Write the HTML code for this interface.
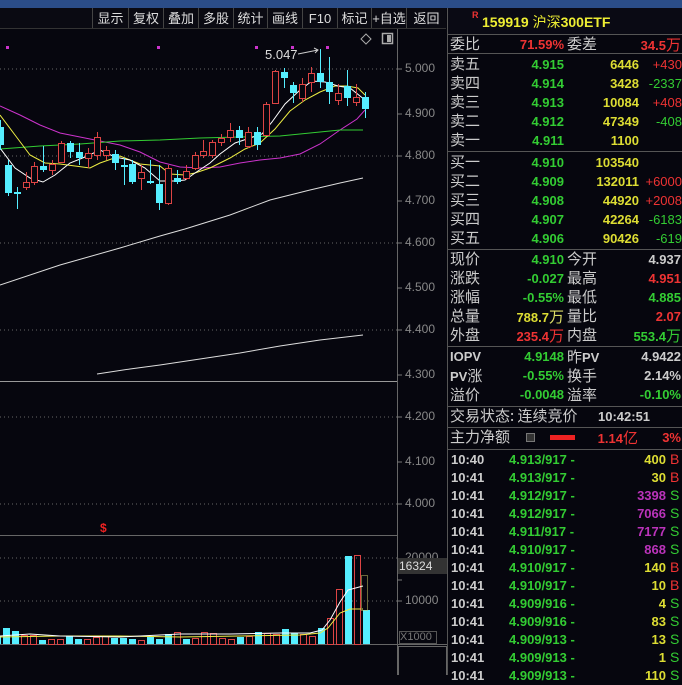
<!DOCTYPE html>
<html><head><meta charset="utf-8"><style>
*{margin:0;padding:0;box-sizing:border-box}
body{width:682px;height:675px;background:#06060e;overflow:hidden;position:relative;font-family:"Liberation Sans","Noto Sans CJK SC",sans-serif;}
.a{position:absolute;white-space:nowrap}
.tb{position:absolute;top:8px;height:21px;border-left:1px solid #444;color:#ddd;font-size:13px;line-height:21px;text-align:center}
.r{position:absolute;height:19px;line-height:19px;font-size:13px;font-weight:bold;white-space:nowrap}
.lb{font-family:"Noto Sans CJK SC",sans-serif;font-weight:normal;font-size:15px;color:#ccc}
.g{color:#3c3}.y{color:#dd3}.rd{color:#e33}.w{color:#ccc}.m{color:#b3b}
.ax{position:absolute;left:405px;font-size:12px;color:#888;}
.hl{position:absolute;left:448px;width:234px;height:1px;background:#555}
</style></head><body>
<div class="a" style="left:0;top:0;width:682px;height:8px;background:#2b4d88"></div>
<div class="a" style="left:0;top:8px;width:446px;height:21px;background:#0a0a12"></div>
<div class="tb" style="left:92px;width:36px">显示</div>
<div class="tb" style="left:128px;width:35px">复权</div>
<div class="tb" style="left:163px;width:35px">叠加</div>
<div class="tb" style="left:198px;width:35px">多股</div>
<div class="tb" style="left:233px;width:34px">统计</div>
<div class="tb" style="left:267px;width:35px">画线</div>
<div class="tb" style="left:302px;width:35px">F10</div>
<div class="tb" style="left:337px;width:34px">标记</div>
<div class="tb" style="left:371px;width:35px">+自选</div>
<div class="tb" style="left:406px;width:40px">返回</div>
<div class="a" style="left:0;top:28px;width:446px;height:1px;background:#333"></div>
<svg class="a" style="left:0;top:0" width="448" height="675">
<g stroke="#666" stroke-dasharray="1,3">
<line x1="0" y1="69" x2="397" y2="69"/><line x1="0" y1="156" x2="397" y2="156"/><line x1="0" y1="243" x2="397" y2="243"/><line x1="0" y1="330" x2="397" y2="330"/><line x1="0" y1="417" x2="397" y2="417"/><line x1="0" y1="504" x2="397" y2="504"/><line x1="0" y1="558" x2="397" y2="558"/><line x1="0" y1="601" x2="397" y2="601"/>
</g>
<g stroke="#666"><line x1="397.5" y1="29" x2="397.5" y2="675"/>
<line x1="0" y1="381.5" x2="397" y2="381.5" stroke="#999"/><line x1="0" y1="535.5" x2="397" y2="535.5"/><line x1="0" y1="644.5" x2="448" y2="644.5"/>
<rect x="398.5" y="646.5" width="48" height="30" fill="none"/>
</g>
<g stroke="#777">
<line x1="397" y1="69" x2="402" y2="69"/><line x1="397" y1="114" x2="402" y2="114"/><line x1="397" y1="156" x2="402" y2="156"/><line x1="397" y1="201" x2="402" y2="201"/><line x1="397" y1="243" x2="402" y2="243"/><line x1="397" y1="288" x2="402" y2="288"/><line x1="397" y1="330" x2="402" y2="330"/><line x1="397" y1="375" x2="402" y2="375"/><line x1="397" y1="417" x2="402" y2="417"/><line x1="397" y1="462" x2="402" y2="462"/><line x1="397" y1="504" x2="402" y2="504"/><line x1="397" y1="580" x2="402" y2="580"/><line x1="397" y1="601" x2="402" y2="601"/>
</g>
<g fill="#c3c"><rect x="6" y="46" width="3" height="3"/><rect x="157" y="46" width="3" height="3"/><rect x="255" y="46" width="3" height="3"/><rect x="291" y="46" width="3" height="3"/><rect x="326" y="46" width="3" height="3"/></g>
<path d="M366 34l5 5-5 5-5-5z" fill="none" stroke="#aaa"/><rect x="382.5" y="33.5" width="10" height="10" fill="none" stroke="#aaa" stroke-width="1.5"/><rect x="387" y="35" width="4" height="7" fill="#aaa"/>
<text x="265" y="59" fill="#ddd" font-size="13" font-family="Liberation Sans">5.047</text>
<path d="M298 54l20-4m-4-2l4 2-3 3" stroke="#ccc" fill="none"/>
<polyline fill="none" stroke="#c3c" points="0,106 20,115 40,125 60,133 80,137 100,141 120,145 140,152 160,162 180,167 200,168 220,167 240,163 260,160 280,158 300,154 320,144 340,130 357,119 365,110"/>
<polyline fill="none" stroke="#3c3" points="0,149 40,146 80,144 120,141 160,140 200,138 240,137 280,136 320,132 340,130 363,130"/>
<polyline fill="none" stroke="#ee4" points="0,115 15,135 30,155 45,163 60,164 75,166 90,168 100,163 120,156 140,164 160,166 170,174 185,175 195,173 210,168 230,158 245,149 260,143 275,129 290,111 305,100 320,92 335,86 347,86 358,88 365,95"/>
<polyline fill="none" stroke="#fff" points="0,148 15,168 30,178 43,182 55,175 70,163 85,157 100,150 115,157 130,160 145,168 160,181 175,181 185,180 195,173 210,163 220,154 235,143 250,138 262,134 272,122 285,104 300,90 312,81 325,82 338,86 350,88 365,100"/>
<polyline fill="none" stroke="#ddd" points="0,285 60,265 120,248 160,236 185,229 230,215 270,200 310,190 340,183 363,178"/>
<polyline fill="none" stroke="#ddd" points="97,374 130,369 160,365 200,359 240,353 280,346 320,340 363,335"/>
<g id="c"></g>
<g id="v"></g>
<polyline fill="none" stroke="#ee4" points="0,637 60,636 120,636 180,637 240,636 300,635 320,633 328,628 340,613 350,609 363,609"/>
<polyline fill="none" stroke="#fff" points="0,636 30,634 60,636 120,637 180,634 230,634 280,633 310,633 322,630 330,620 340,602 348,590 363,586"/>
<rect x="361.5" y="575.5" width="6" height="35" fill="none" stroke="#cc6" stroke-dasharray="1,1"/>
<text x="100" y="532" fill="#e22" font-size="12" font-weight="bold" font-family="Liberation Sans">$</text>
</svg>
<div class="ax" style="top:61px">5.000</div><div class="ax" style="top:106px">4.900</div><div class="ax" style="top:148px">4.800</div><div class="ax" style="top:193px">4.700</div><div class="ax" style="top:235px">4.600</div><div class="ax" style="top:280px">4.500</div><div class="ax" style="top:322px">4.400</div><div class="ax" style="top:367px">4.300</div><div class="ax" style="top:409px">4.200</div><div class="ax" style="top:454px">4.100</div><div class="ax" style="top:496px">4.000</div>
<div class="ax" style="top:550px">20000</div><div class="ax" style="top:593px">10000</div>
<div class="a" style="left:398px;top:558px;width:50px;height:16px;background:#333;color:#ddd;font-size:12px;line-height:16px;padding-left:1px">16324</div>
<div class="a" style="left:399px;top:631px;width:38px;height:13px;border:1px solid #555;color:#777;font-size:11px;line-height:11px">X1000</div>
<div class="a" style="left:447px;top:8px;width:1px;height:667px;background:#555"></div>
<div class="a" style="left:448px;top:8px;width:234px;height:26px;background:#0a0a14"></div>
<div class="a" style="left:472px;top:10px;color:#e33;font-size:9px;font-weight:bold">R</div>
<div class="a" style="left:482px;top:12px;color:#ee3;font-size:14px;font-weight:bold">159919 <span style="font-family:'Noto Sans CJK SC';font-weight:normal">沪深</span>300ETF</div>
<div class="hl" style="top:34px"></div>
<div id="rp"></div>
<script>
var s='';
var C=[[0,127,145,120,150,0],[8,165,193,160,196,0],[17,192,194,187,209,0],[26,182,187,172,190,1],[34,166,182,162,185,1],[43,166,170,146,172,0],[52,164,170,160,175,1],[61,143,162,141,163,1],[70,143,152,141,158,0],[79,152,158,143,165,0],[88,153,158,148,168,1],[97,137,155,132,160,1],[106,150,155,146,160,1],[115,154,163,150,170,0],[124,165,167,158,185,0],[132,164,182,160,184,0],[141,172,178,165,190,1],[150,181,183,160,184,0],[159,184,203,165,210,0],[168,168,203,165,205,1],[177,178,182,170,184,0],[186,171,178,165,180,1],[195,155,168,152,170,1],[203,151,155,140,158,1],[212,142,155,140,158,1],[221,138,142,134,146,1],[230,130,137,123,142,1],[239,130,138,126,145,0],[248,132,146,127,148,1],[257,132,145,127,150,0],[266,104,135,102,136,1],[275,71,103,70,104,1],[284,72,78,68,88,0],[293,85,93,82,103,0],[302,84,98,78,102,1],[311,73,82,67,92,1],[320,73,82,49,88,0],[329,82,92,57,104,0],[338,93,100,84,105,1],[347,86,98,70,106,0],[356,97,102,84,106,1],[365,97,109,92,118,0]];
C.forEach(function(c){var x=c[0],col=c[5]?'#d44':'#5ef';s+='<line x1="'+(x+.5)+'" y1="'+c[3]+'" x2="'+(x+.5)+'" y2="'+c[4]+'" stroke="'+col+'"/>';
if(c[5])s+='<rect x="'+(x-2.5)+'" y="'+(c[1]+.5)+'" width="6" height="'+Math.max(1,c[2]-c[1])+'" fill="#06060e" stroke="'+col+'"/>';else s+='<rect x="'+(x-3)+'" y="'+c[1]+'" width="7" height="'+Math.max(1,c[2]-c[1])+'" fill="'+col+'"/>';});
document.getElementById('c').innerHTML=s;
var H=[7,16,13,9,9,4,5,5,8,5,5,7,8,6,6,5,4,7,5,10,12,5,6,12,11,6,5,7,8,12,11,10,15,11,10,8,16,26,55,88,89,34];
var R=[0,0,0,1,1,0,1,1,0,0,1,1,1,0,0,0,1,0,0,0,1,0,1,1,1,1,1,0,1,0,1,1,0,0,1,1,0,1,1,0,1,0];
s='';H.forEach(function(h,i){var x=i*9-6;var col=R[i]?'#d44':'#5ef';
if(R[i])s+='<rect x="'+(x+.5)+'" y="'+(644-h+.5)+'" width="6" height="'+h+'" fill="none" stroke="'+col+'"/>';else s+='<rect x="'+x+'" y="'+(644-h)+'" width="7" height="'+h+'" fill="'+col+'"/>';});
document.getElementById('v').innerHTML=s;
var rp='';function row(t,h){rp+='<div class="a" style="left:448px;top:'+t+'px;width:234px;height:19px">'+h+'</div>';}
function c(l,w,cls,t,al){return '<div class="r '+cls+'" style="left:'+l+'px;width:'+w+'px;text-align:'+(al||'right')+'">'+t+'</div>';}
function L(t,l){return '<div class="r lb" style="left:'+(l||2)+'px;top:-1px">'+t+'</div>';}
row(35,L('委比')+c(30,86,'rd','71.59%')+L('委差',119)+c(160,73,'rd','34.5<span class=lb style="color:#e33">万</span>'));
var S=[['卖五','4.915','6446','+430','rd'],['卖四','4.914','3428','-2337','g'],['卖三','4.913','10084','+408','rd'],['卖二','4.912','47349','-408','g'],['卖一','4.911','1100','',''],['买一','4.910','103540','',''],['买二','4.909','132011','+6000','rd'],['买三','4.908','44920','+2008','rd'],['买四','4.907','42264','-6183','g'],['买五','4.906','90426','-619','g']];
S.forEach(function(a,i){var t=55+i*19+(i>=5?3:0);row(t,L(a[0])+c(50,66,'g',a[1])+c(110,81,'y',a[2])+'<div class="r '+a[4]+'" style="left:190px;width:44px;text-align:right;font-weight:normal">'+a[3]+'</div>');});
rp+='<div class="hl" style="top:53px"></div><div class="hl" style="top:151px"></div><div class="hl" style="top:249px"></div>';
var Q=[['现价','4.910','g','今开','4.937','w'],['涨跌','-0.027','g','最高','4.951','rd'],['涨幅','-0.55%','g','最低','4.885','g'],['总量','788.7<span class=lb style="color:#dd6">万</span>','y','量比','2.07','rd'],['外盘','235.4<span class=lb style="color:#e33">万</span>','rd','内盘','553.4<span class=lb style="color:#3c3">万</span>','g']];
Q.forEach(function(a,i){row(250+i*19,L(a[0])+c(30,86,a[2],a[1])+L(a[3],119)+c(150,83,a[5],a[4]));});
rp+='<div class="hl" style="top:346px"></div>';
var P=[['IOPV','4.9148','g','昨PV','4.9422','w'],['PV涨','-0.55%','g','换手','2.14%','w'],['溢价','-0.0048','g','溢率','-0.10%','g']];
P.forEach(function(a,i){row(347+i*19,'<div class="r w" style="left:2px">'+a[0].replace(/([\u4e00-\u9fff]+)/,'<span class=lb>$1</span>')+'</div>'+c(30,86,a[2],a[1])+'<div class="r w" style="left:119px">'+a[3].replace(/([\u4e00-\u9fff]+)/,'<span class=lb>$1</span>')+'</div>'+c(150,83,a[5],a[4]));});
rp+='<div class="hl" style="top:406px"></div>';
row(407,L('交易状态: 连续竞价')+'<div class="r w" style="left:150px">10:42:51</div>');
rp+='<div class="hl" style="top:427px"></div>';
row(428,L('主力净额')+'<div class="a" style="left:78px;top:5px;width:9px;height:9px;border:1px solid #777;background:#333"></div><div class="a" style="left:102px;top:7px;width:25px;height:5px;background:#e22"></div>'+c(140,50,'rd','1.14<span class=lb style="color:#e33">亿</span>')+c(200,33,'rd','3%'));
rp+='<div class="hl" style="top:449px"></div>';
var T=[['10:40','4.913/917','400','y','B'],['10:41','4.913/917','30','y','B'],['10:41','4.912/917','3398','m','S'],['10:41','4.912/917','7066','m','S'],['10:41','4.911/917','7177','m','S'],['10:41','4.910/917','868','m','S'],['10:41','4.910/917','140','y','B'],['10:41','4.910/917','10','y','B'],['10:41','4.909/916','4','y','S'],['10:41','4.909/916','83','y','S'],['10:41','4.909/913','13','y','S'],['10:41','4.909/913','1','y','S'],['10:41','4.909/913','110','y','S']];
T.forEach(function(a,i){row(450+i*18,'<div class="r w" style="left:3px">'+a[0]+'</div><div class="r g" style="left:61px">'+a[1]+' -</div>'+c(160,58,a[3],a[2])+'<div class="r '+(a[4]=='B'?'rd':'g')+'" style="left:222px;font-weight:normal;font-size:14px">'+a[4]+'</div>');});
document.getElementById('rp').innerHTML=rp;
</script>
</body></html>
